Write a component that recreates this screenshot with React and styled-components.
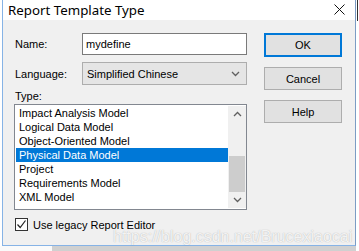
import React from "react";
import styled, { createGlobalStyle } from "styled-components";

const Global = createGlobalStyle`
  html, body { margin: 0; padding: 0; background: #fff; overflow: hidden; }
  * { box-sizing: border-box; }
`;

const Page = styled.div`
  position: relative;
  width: 359px;
  height: 251px;
  display: flex;
  flex-direction: column;
  background: #fff;
  font-family: "Liberation Sans", Arial, sans-serif;
  font-size: 11px;
  color: #000;
`;

const Top = styled.div`
  display: flex;
  height: 246px;
  padding-left: 2px;
`;

const Dialog = styled.div`
  width: 354px;
  display: flex;
  flex-direction: column;
  border-left: 1px solid #86b3e6;
  border-right: 1px solid #7c9cc4;
  border-bottom: 1px solid #86b3e6;
`;

const RightGutter = styled.div`
  flex: 1;
  display: flex;
  flex-direction: column;
`;

const GutterDark = styled.div`
  height: 21px;
  width: 1px;
  margin-left: 1px;
  background: #333;
`;

const BottomStrip = styled.div`
  flex: 1;
  display: flex;
`;

const StripWhite = styled.div`
  width: 52px;
  background: #fafafa;
`;

const StripGray = styled.div`
  width: 304px;
  background: #d0d0d0;
`;

const TitleBar = styled.div`
  height: 20px;
  background: #fff;
  display: flex;
  align-items: center;
  justify-content: space-between;
  padding: 0 10px 1px 5px;
`;

const Title = styled.div`
  font-family: "Noto Sans", "Open Sans", sans-serif;
  font-size: 13.3px;
  color: #000;
  line-height: 18px;
`;

const Body = styled.div`
  flex: 1;
  background: #f0f0f0;
  display: grid;
  grid-template-columns: 233px 78px;
  column-gap: 17px;
  padding: 13px 0 0 11px;
`;

const LeftCol = styled.div`
  display: flex;
  flex-direction: column;
`;

const FieldRow = styled.div`
  display: flex;
  align-items: center;
  height: ${(p) => p.$h}px;
  margin-top: ${(p) => p.$mt || 0}px;
`;

const Label = styled.div`
  width: 68px;
  padding-left: 1px;
`;

const Input = styled.div`
  flex: 1;
  height: 100%;
  background: #fff;
  border: 1px solid #7a7a7a;
  display: flex;
  align-items: center;
  padding-left: 3px;
`;

const Combo = styled.div`
  flex: 1;
  height: 100%;
  background: #e5e5e5;
  border: 1px solid #adadad;
  display: flex;
  align-items: center;
  justify-content: space-between;
  padding: 0 6px 0 4px;
`;

const TypeLabel = styled.div`
  margin-top: 4px;
  height: 15px;
  line-height: 15px;
  padding-left: 1px;
`;

const ListBox = styled.div`
  height: 106px;
  background: #fff;
  border: 1px solid #828790;
  padding: 1px 0 1px 1px;
  display: flex;
`;

const Items = styled.div`
  flex: 1;
  display: flex;
  flex-direction: column;
`;

const Item = styled.div`
  height: 14px;
  line-height: 14px;
  padding-left: 3px;
  background: ${(p) => (p.$sel ? "#0078d7" : "transparent")};
  color: ${(p) => (p.$sel ? "#fff" : "#000")};
`;

const ScrollBar = styled.div`
  width: 18px;
  background: #f0f0f0;
  display: flex;
  flex-direction: column;
`;

const ScrollBtn = styled.div`
  height: 17px;
  display: flex;
  align-items: center;
  justify-content: center;
`;

const Track = styled.div`
  flex: 1;
  display: flex;
  flex-direction: column;
  padding: 34px 1px 0 1px;
`;

const Thumb = styled.div`
  height: 36px;
  background: #cdcdcd;
`;

const CheckRow = styled.div`
  margin-top: 7px;
  display: flex;
  align-items: center;
  gap: 5px;
  padding-left: 1px;
  height: 15px;
`;

const CheckBox = styled.div`
  width: 13px;
  height: 13px;
  border: 1px solid #333;
  background: #fff;
  display: flex;
  align-items: center;
  justify-content: center;
`;

const RightCol = styled.div`
  display: flex;
  flex-direction: column;
  gap: 10px;
`;

const Button = styled.div`
  height: ${(p) => (p.$def ? 24 : 23)}px;
  background: #e1e1e1;
  border: ${(p) => (p.$def ? "2px solid #0078d7" : "1px solid #adadad")};
  display: flex;
  align-items: center;
  justify-content: center;
`;

const Watermark = styled.div`
  position: absolute;
  left: 113px;
  top: 228px;
  font-family: "Liberation Sans", Arial, sans-serif;
  font-size: 16px;
  line-height: 18px;
  color: rgba(255, 255, 255, 0.85);
  text-shadow: 0 0 1px rgba(120, 120, 120, 0.6);
  white-space: nowrap;
  pointer-events: none;
`;

const Chevron = ({ up }) => (
  <svg width="9" height="6" viewBox="0 0 9 6">
    <path
      d={up ? "M1 5 L4.5 1.5 L8 5" : "M1 1 L4.5 4.5 L8 1"}
      fill="none"
      stroke="#606060"
      strokeWidth="1.3"
    />
  </svg>
);

const items = [
  "Impact Analysis Model",
  "Logical Data Model",
  "Object-Oriented Model",
  "Physical Data Model",
  "Project",
  "Requirements Model",
  "XML Model",
];

export default function App() {
  return (
    <Page>
      <Global />
      <Top>
        <Dialog>
          <TitleBar>
            <Title>Report Template Type</Title>
            <svg width="11" height="11" viewBox="0 0 11 11">
              <path d="M0.5 0.5 L10.5 10.5 M10.5 0.5 L0.5 10.5" stroke="#111" strokeWidth="1" />
            </svg>
          </TitleBar>
          <Body>
            <LeftCol>
              <FieldRow $h={22}>
                <Label>Name:</Label>
                <Input>mydefine</Input>
              </FieldRow>
              <FieldRow $h={23} $mt={7}>
                <Label>Language:</Label>
                <Combo>
                  <span>Simplified Chinese</span>
                  <Chevron />
                </Combo>
              </FieldRow>
              <TypeLabel>Type:</TypeLabel>
              <ListBox>
                <Items>
                  {items.map((t) => (
                    <Item key={t} $sel={t === "Physical Data Model"}>
                      {t}
                    </Item>
                  ))}
                </Items>
                <ScrollBar>
                  <ScrollBtn>
                    <Chevron up />
                  </ScrollBtn>
                  <Track>
                    <Thumb />
                  </Track>
                  <ScrollBtn>
                    <Chevron />
                  </ScrollBtn>
                </ScrollBar>
              </ListBox>
              <CheckRow>
                <CheckBox>
                  <svg width="11" height="11" viewBox="0 0 11 11">
                    <path d="M1.5 5.5 L4.2 8.5 L9.5 1.5" fill="none" stroke="#222" strokeWidth="1.2" />
                  </svg>
                </CheckBox>
                <span>Use legacy Report Editor</span>
              </CheckRow>
            </LeftCol>
            <RightCol>
              <Button $def>OK</Button>
              <Button>Cancel</Button>
              <Button>Help</Button>
            </RightCol>
          </Body>
        </Dialog>
        <RightGutter>
          <GutterDark />
        </RightGutter>
      </Top>
      <BottomStrip>
        <StripWhite />
        <StripGray />
      </BottomStrip>
      <Watermark>https://blog.csdn.net/Brucexiaocai</Watermark>
    </Page>
  );
}
